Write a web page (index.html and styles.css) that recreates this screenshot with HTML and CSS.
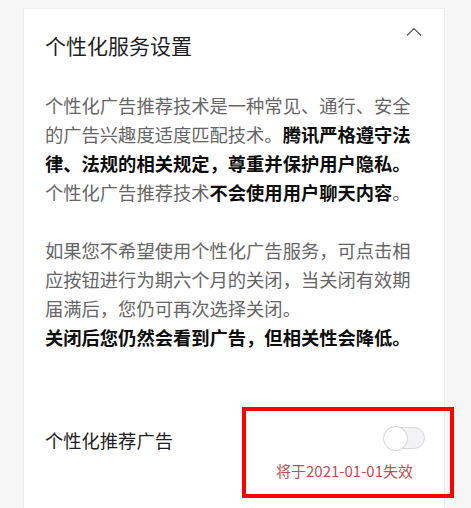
FILE: index.html
```html
<!DOCTYPE html>
<html lang="zh-CN">
<head>
  <meta charset="UTF-8" />
  <meta name="viewport" content="width=device-width, initial-scale=1.0"/>
  <title>个性化服务设置</title>
  <link rel="stylesheet" href="styles.css">
</head>
<body>
  <div class="card">
    <div class="card-header">
      <h1>个性化服务设置</h1>
      <svg class="chevron" width="16" height="10" viewBox="0 0 16 10">
        <polyline points="1,8.5 8,1.5 15,8.5" fill="none" stroke="#555" stroke-width="1.1"/>
      </svg>
    </div>

    <p class="desc">
      个性化广告推荐技术是一种常见、通行、安全的广告兴趣度适度匹配技术。<b>腾讯严格遵守法律、法规的相关规定，尊重并保护用户隐私。</b>个性化广告推荐技术<b>不会使用用户聊天内容</b>。
    </p>

    <p class="desc">
      如果您不希望使用个性化广告服务，可点击相应按钮进行为期六个月的关闭，当关闭有效期届满后，您仍可再次选择关闭。<br />
      <b>关闭后您仍然会看到广告，但相关性会降低。</b>
    </p>

    <div class="setting-row">
      <span class="label">个性化推荐广告</span>
      <div class="setting-right">
        <span class="switch"></span>
        <span class="expire">将于2021-01-01失效</span>
      </div>
      <!-- 标注框 -->
      <div class="mark-box"></div>
    </div>
  </div>
</body>
</html>
```

FILE: styles.css
```css
body {
  margin: 0;
  padding: 0;
  background: #f6f6f6;
  font-family: 'Noto Sans CJK SC', 'Noto Sans', sans-serif;
  color: #666;
  height: 508px;
  overflow: hidden;
}

.card {
  margin: 8px 0 0 23px;
  width: 422px;
  min-height: 520px;
  box-sizing: border-box;
  padding: 18px 22px 0 21px;
  background: #fff;
  border: 1px solid #eeeeee;
  border-bottom: none;
}

.card-header {
  display: flex;
  justify-content: space-between;
  align-items: flex-start;
}

.card-header h1 {
  margin: 4px 0 0 0;
  font-size: 21px;
  font-weight: normal;
  line-height: 28px;
  color: #1e1e1e;
}

.chevron {
  display: block;
  margin-top: 0;
}

.desc {
  max-width: 375px;
  margin: 32px 0 0 0;
  font-size: 18.3px;
  line-height: 29px;
}

.desc + .desc {
  margin-top: 29px;
}

.desc b {
  color: #0d0d0d;
  font-weight: bold;
}

.setting-row {
  position: relative;
  display: flex;
  justify-content: space-between;
  align-items: flex-start;
  margin-top: 74px;
}

.label {
  font-size: 18.3px;
  line-height: 29px;
  color: #1e1e1e;
}

.setting-right {
  display: flex;
  flex-direction: column;
  align-items: flex-end;
}

.switch {
  position: relative;
  display: block;
  width: 37px;
  height: 22px;
  margin: 1px -3px 0 0;
  box-sizing: border-box;
  border: 1px solid #d8d8dc;
  border-radius: 11px;
  background: #f3f3f6;
}

.switch::before {
  content: "";
  position: absolute;
  left: -6px;
  top: -2.5px;
  width: 25px;
  height: 25px;
  box-sizing: border-box;
  border-radius: 50%;
  border: 1.5px solid #d2d2d6;
  background: #fff;
}

.expire {
  margin: 12px 9px 0 0;
  font-size: 15px;
  line-height: 20px;
  color: #c0504f;
}

.mark-box {
  position: absolute;
  left: 197px;
  top: -19px;
  width: 212px;
  height: 91px;
  box-sizing: border-box;
  border: 4px solid #ff0000;
  pointer-events: none;
}
```
